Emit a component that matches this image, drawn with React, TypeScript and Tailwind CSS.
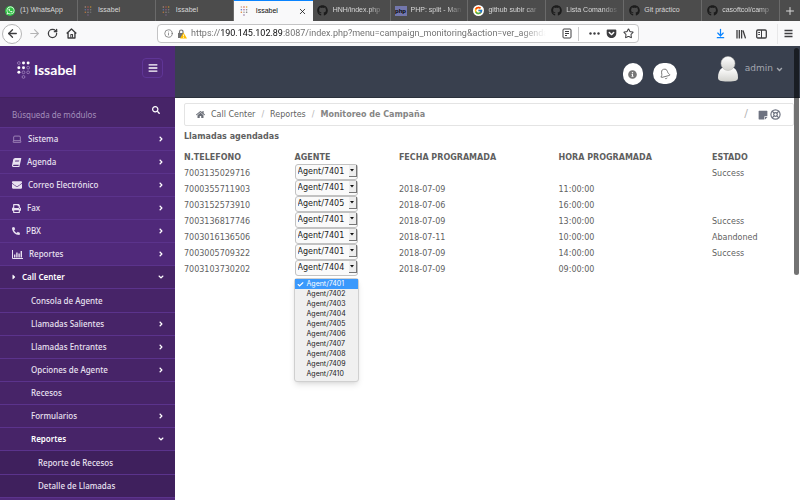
import React from 'react';
import {
  FaAngleDown, FaAngleRight, FaBars, FaBook, FaCaretRight, FaEnvelope, FaGetPocket, FaGithub,
  FaHome, FaInfoCircle, FaPhoneAlt, FaPrint, FaSearch, FaStickyNote, FaWhatsapp,
} from 'react-icons/fa';
import { FcGoogle } from 'react-icons/fc';
import { ArrowLeft, ArrowRight, ArrowDownToLine, Bell, Check, Info, Laptop, LifeBuoy, Plus, RotateCw, Star, X } from 'lucide-react';

const LOGO_DOTS: [number, number, boolean][] = [
  [2, 2, false], [7, 2, true], [12, 2, true],
  [2, 7, true], [7, 7, true], [12, 7, false],
  [2, 12, true], [7, 12, false], [12, 12, false],
  [7, 17, false],
];

function IssabelMark() {
  return (
    <svg width="13" height="18" viewBox="0 0 14 19" aria-hidden="true">
      {LOGO_DOTS.map(([x, y, full]) => (
        <circle key={`${x}-${y}`} cx={x} cy={y} r={full ? 1.6 : 1.5} fill={full ? '#fff' : 'none'} stroke={full ? 'none' : '#a68bc2'} strokeWidth="0.8" />
      ))}
    </svg>
  );
}

function IssabelFavicon({ light = false }: { light?: boolean }) {
  const colors = ['#c9a08a', '#d9573c', '#e0a030', '#5b7fc4', '#b05a9a', '#8a8a8a', '#e0853a', '#9a9a9a', '#7d7d7d', '#8a6a9a'];
  return (
    <svg width="8" height="10" viewBox="0 0 14 19" aria-hidden="true" opacity={light ? 1 : 0.75}>
      {LOGO_DOTS.map(([x, y], i) => <circle key={i} cx={x} cy={y} r="1.5" fill={colors[i]} />)}
    </svg>
  );
}

const github = <FaGithub size={11} className="text-[#1c1c1c]" />;

const tabs: { title: string; icon: React.ReactNode; active?: boolean }[] = [
  {
    title: '(1) WhatsApp',
    icon: (
      <span className="grid size-2.5 place-items-center rounded-full bg-[#2fc143] text-white">
        <FaWhatsapp size={9} />
      </span>
    ),
  },
  { title: 'Issabel', icon: <IssabelFavicon /> },
  { title: 'Issabel', icon: <IssabelFavicon /> },
  { title: 'Issabel', icon: <IssabelFavicon light />, active: true },
  { title: 'HNH/index.php', icon: github },
  {
    title: 'PHP: split - Man',
    icon: <span className="grid h-2.5 w-3 place-items-center bg-[#7377ad] text-[6px] leading-none font-bold text-black">php</span>,
  },
  { title: 'github subir car', icon: <span className="rounded-full bg-white p-px"><FcGoogle size={9} /></span> },
  { title: 'Lista Comandos', icon: github },
  { title: 'Git práctico', icon: github },
  { title: 'casoftcol/camp', icon: github },
];

function TabStrip() {
  return (
    <div role="tablist" className="flex h-[21px] bg-[#4c4c4c] font-['Liberation_Sans',sans-serif] text-[7px] font-medium text-[#d8d8d8]">
      {tabs.map((t, i) => (
        <div
          key={i}
          role="tab"
          aria-selected={!!t.active}
          className={
            t.active
              ? 'flex min-w-0 flex-1 items-center gap-1.5 border-t border-[#0a84ff] bg-[#f9f9fa] pr-1.5 pl-1 text-[#0c0c0d]'
              : 'flex min-w-0 flex-1 items-center gap-1 border-r border-[#6a6a6a] pr-1 pl-1'
          }
        >
          <span className="grid w-3 shrink-0 place-items-center">{t.icon}</span>
          <span className={t.title.length > 12 ? 'flex-1 mask-r-from-70% whitespace-nowrap' : 'flex-1 whitespace-nowrap'}>{t.title}</span>
          {t.active && <button aria-label="Cerrar"><X size={9} strokeWidth={2} /></button>}
        </div>
      ))}
      <button aria-label="Nueva" className="grid w-5 place-items-center"><Plus size={12} /></button>
    </div>
  );
}

function Toolbar() {
  return (
    <div className="flex h-[25px] items-center bg-[#f9f9fa] text-[#3e3e40]">
      <div className="flex items-center gap-1.5 pl-0.5">
        <button aria-label="Atrás" className="grid size-5 place-items-center rounded-full border border-[#b5b5b6] bg-white"><ArrowLeft size={13} strokeWidth={2.4} /></button>
        <button aria-label="Adelante" className="text-[#b4b4b5]"><ArrowRight size={13} strokeWidth={2} /></button>
        <button aria-label="Recargar"><RotateCw size={11} strokeWidth={2.8} /></button>
        <button aria-label="Inicio" className="ml-0.5">
          <svg width="11" height="11" viewBox="0 0 16 16" fill="none" stroke="currentColor" strokeWidth="2" strokeLinejoin="round">
            <path d="M1 8L8 1.5L15 8M3 7V14.5H13V7" />
            <path d="M7 14V9.500H9.500V14" strokeWidth="1.500" />
          </svg>
        </button>
      </div>
      <div className="mr-19 ml-20 flex h-[19px] min-w-0 flex-1 items-center rounded-sm border border-[#c4c4c5] bg-white pr-1 pl-1.5">
        <Info size={9} className="shrink-0 text-[#6d6d6e]" />
        <svg className="ml-1 shrink-0" width="10" height="10" viewBox="0 0 20 20" aria-hidden="true">
          <path d="M5 9V5.500a3.500 3.500 0 0 1 7 0V9" fill="none" stroke="#737373" strokeWidth="2.400" />
          <rect x="2" y="8" width="12" height="10" fill="#737373" />
          <path d="M13 7L20 19H6Z" fill="#ffbf00" />
          <path d="M13 11V15M13 16.500V18" stroke="#fff" strokeWidth="1.600" />
        </svg>
        <div className="ml-1 min-w-0 flex-1 mask-r-from-93% font-['Roboto','Inter',sans-serif] text-[9px] whitespace-nowrap text-[#737373]">
          https://<span className="text-[#0c0c0d]">190.145.102.89</span>:8087/index.php?menu=campaign_monitoring&amp;action=ver_agenda
        </div>
        <div className="ml-4 flex shrink-0 items-center gap-1.5">
          <svg width="10" height="11" viewBox="0 0 10 11" fill="none" stroke="currentColor" aria-hidden="true">
            <rect x="1" y="1" width="8" height="9" rx="1" />
            <path d="M3 3.500H7M3 5.500H7M3 7.500H5" />
          </svg>
          <span className="h-3.5 w-px bg-[#c9c9ca]" />
          <svg className="ml-1" width="11" height="3" viewBox="0 0 11 3" fill="currentColor" aria-hidden="true">
            <circle cx="1.500" cy="1.500" r="1.200" /><circle cx="5.500" cy="1.500" r="1.200" /><circle cx="9.500" cy="1.500" r="1.200" />
          </svg>
          <FaGetPocket size={11} />
          <Star size={11} strokeWidth={2.2} />
        </div>
      </div>
      <div className="flex shrink-0 items-center gap-2.5 pr-[7px]">
        <ArrowDownToLine size={11} strokeWidth={2.6} className="text-[#0a84ff]" />
        <svg width="10" height="10" viewBox="0 0 10 10" stroke="currentColor" strokeWidth="1.300" aria-hidden="true">
          <path d="M1 1V9.500M3.300 1V9.500M5.600 1V9.500M7 1.500L9.500 9.300" />
        </svg>
        <svg width="11" height="10" viewBox="0 0 11 10" fill="none" stroke="currentColor" aria-hidden="true">
          <rect x="0.700" y="1" width="9.600" height="8" rx="1.200" strokeWidth="1.300" />
          <path d="M5.500 1V9M2.200 3.500H4M2.200 5.500H4" />
        </svg>
        <button aria-label="Menú" className="grid h-5 place-items-center border-l border-[#e8e8e9] pl-1.5">
          <svg width="9" height="9" viewBox="0 0 9 9" stroke="currentColor" strokeWidth="1.300"><path d="M0.500 1.500H8.500M0.500 4.500H8.500M0.500 7.500H8.500" /></svg>
        </button>
      </div>
    </div>
  );
}

type Arrow = 'right' | 'down' | null;

function NavRow({ label, icon, arrow, indent, strong = false }: { label: string; icon?: React.ReactNode; arrow: Arrow; indent: string; strong?: boolean }) {
  return (
    <a href="#" className={`flex h-[23px] items-center border-b border-[#5b338c] pr-2.5 ${indent} ${strong ? 'font-semibold text-white' : 'font-medium text-[#e9e2f1]'}`}>
      {icon && <span className="mr-1.5 shrink-0">{icon}</span>}
      <span className="flex-1">{label}</span>
      {arrow === 'right' && <FaAngleRight size={8} className="text-white" />}
      {arrow === 'down' && <FaAngleDown size={8} className="text-white" />}
    </a>
  );
}

const barChart = (
  <svg width="11" height="9" viewBox="0 0 11 9" aria-hidden="true">
    <path d="M0.500 0V8.500H11" fill="none" stroke="currentColor" />
    <path d="M2 4.500H3.400V7.500H2ZM4.200 2.500H5.600V7.500H4.200ZM6.400 3.500H7.800V7.500H6.400ZM8.600 1H10V7.500H8.600Z" fill="currentColor" />
  </svg>
);

const modules: [string, React.ReactNode][] = [
  ['Sistema', <Laptop size={10} className="text-[#a992c2]" />],
  ['Agenda', <FaBook size={9} className="-skew-x-12" />],
  ['Correo Electrónico', <FaEnvelope size={10} />],
  ['Fax', <FaPrint size={9} />],
  ['PBX', <FaPhoneAlt size={8} />],
  ['Reportes', barChart],
];

const callCenter: [string, Arrow][] = [
  ['Consola de Agente', null],
  ['Llamadas Salientes', 'right'],
  ['Llamadas Entrantes', 'right'],
  ['Opciones de Agente', 'right'],
  ['Recesos', null],
  ['Formularios', 'right'],
  ['Reportes', 'down'],
];

function Sidebar() {
  return (
    <aside className="w-[175px] shrink-0 bg-[#50297a] font-['Noto_Sans','Open_Sans',sans-serif] text-[8px]">
      <div className="flex h-[52px] items-start justify-between border-b border-[#43215f] pt-3 pr-3 pl-[17px]">
        <div className="flex items-center gap-1 pt-0.5 text-white">
          <IssabelMark />
          <span className="font-['Lato','Open_Sans',sans-serif] text-[14px] leading-5 font-bold">Issabel</span>
        </div>
        <button aria-label="Contraer" className="grid h-5 w-[21px] place-items-center rounded-sm border border-[#5f3596] text-white"><FaBars size={10} /></button>
      </div>
      <form className="flex h-[30px] items-start border-b border-[#5b338c] bg-[#472468] pt-2 pr-[15px] pl-3">
        <input aria-label="Búsqueda de módulos" placeholder="Búsqueda de módulos" className="h-4 min-w-0 flex-1 bg-transparent outline-none placeholder:text-[#a48fbb]" />
        <button type="button" aria-label="Buscar" className="text-white"><FaSearch size={8} /></button>
      </form>
      <nav>
        {modules.map(([label, icon]) => <NavRow key={label} label={label} icon={icon} arrow="right" indent="pl-3" />)}
        <div className="bg-[#472468]">
          <NavRow label="Call Center" icon={<FaCaretRight size={8} className="-mx-0.5" />} arrow="down" indent="pl-3" strong />
          <div className="pt-px">
            {callCenter.map(([label, arrow]) => <NavRow key={label} label={label} arrow={arrow} indent="pl-[31px]" strong={arrow === 'down'} />)}
          </div>
          <div className="bg-[#3f205d] pt-px">
            <NavRow label="Reporte de Recesos" arrow={null} indent="pl-[38px]" />
            <NavRow label="Detalle de Llamadas" arrow={null} indent="pl-[38px]" />
          </div>
        </div>
      </nav>
    </aside>
  );
}

function TopBar() {
  return (
    <header className="flex h-[52px] items-start justify-end border-b border-[#2b313b] bg-[#39404e] pr-4">
      <button aria-label="Información" className="mt-[17px] grid h-[22px] w-5 place-items-center rounded-full bg-white text-[#777]"><FaInfoCircle size={9} /></button>
      <button aria-label="Notificaciones" className="mt-[17px] ml-2.5 grid h-[21px] w-6 place-items-center rounded-full bg-white text-[#777]"><Bell size={12} strokeWidth={1.8} className="-rotate-15" /></button>
      <div className="mt-2.5 ml-10 flex items-center gap-1.5 text-[9px] text-[#a3a7ae]">
        <svg width="22" height="26" viewBox="0 0 22 26" aria-hidden="true">
          <defs>
            <linearGradient id="avatar" x1="0" y1="0" x2="0" y2="1"><stop offset="0" stopColor="#fff" /><stop offset="1" stopColor="#d2d2ce" /></linearGradient>
          </defs>
          <path d="M5 12C2 14 1 18 1 21.500C1 24.500 3 25.500 11 25.500S21 24.500 21 21.500C21 18 20 14 17 12Z" fill="url(#avatar)" />
          <circle cx="11" cy="7.500" r="7" fill="url(#avatar)" stroke="#b4b4b0" strokeWidth="0.500" />
        </svg>
        <span>admin</span>
        <FaAngleDown size={9} className="-ml-1" />
      </div>
    </header>
  );
}

const AGENTS = ['7401', '7402', '7403', '7404', '7405', '7406', '7407', '7408', '7409', '7410'].map((n) => `Agent/${n}`);

const calls = [
  ['7003135029716', '7401', '', '', 'Success'],
  ['7000355711903', '7401', '2018-07-09', '11:00:00', ''],
  ['7003152573910', '7405', '2018-07-06', '16:00:00', ''],
  ['7003136817746', '7401', '2018-07-09', '13:00:00', 'Success'],
  ['7003016136506', '7401', '2018-07-11', '10:00:00', 'Abandoned'],
  ['7003005709322', '7401', '2018-07-09', '14:00:00', 'Success'],
  ['7003103730202', '7404', '2018-07-09', '09:00:00', ''],
];

function AgentMenu() {
  return (
    <ul role="listbox" aria-label="Agentes" className="absolute top-full -left-px z-10 mt-0.5 w-[65px] rounded-[3px] border border-[#d0d0d0] bg-[#f0f0f0] pb-0.5 font-['Inter',sans-serif] text-[7px] leading-[10px] text-[#1a1a1a] shadow-md">
      {AGENTS.map((a, i) => (
        <li key={a} role="option" aria-selected={i === 0} className={i === 0 ? 'flex items-center bg-[#3b99fc] text-white' : 'flex items-center'}>
          <span className="grid w-3 place-items-center">{i === 0 && <Check size={7} strokeWidth={4} />}</span>
          {a}
        </li>
      ))}
    </ul>
  );
}

function AgentSelect({ agent, phone }: { agent: string; phone: string }) {
  return (
    <div className="relative w-[63px]">
      <select
        aria-label={`Agente ${phone}`}
        defaultValue={`Agent/${agent}`}
        className="block h-4 w-full appearance-none rounded-[3px] border border-[#c2c2c2] bg-[#fafafa] pb-px pl-0.5 text-[8px] leading-3 text-[#222]"
      >
        {AGENTS.map((a) => <option key={a}>{a}</option>)}
      </select>
      <span className="pointer-events-none absolute top-px right-px grid h-3 w-2 place-items-center border-r border-b border-[#777] bg-[#eee]">
        <svg width="4" height="3" viewBox="0 0 4 3" aria-hidden="true"><path d="M0 0H4L2 2.500Z" fill="#111" /></svg>
      </span>
    </div>
  );
}

function Content() {
  return (
    <main className="pl-[9px] text-[8px] text-[#5f5f5f]">
      <div className="mt-[5px] mr-1.5 flex h-[23px] items-center rounded-xs border border-[#e4e4e4] pr-3 pl-[11px]">
        <nav aria-label="Ruta" className="flex items-center">
          <FaHome size={9} className="mr-1.5 text-[#6b6f78]" />
          <a href="#">Call Center</a>
          <span className="mx-1.5 text-[#b5b5b5]">/</span>
          <a href="#">Reportes</a>
          <span className="mx-1.5 text-[#b5b5b5]">/</span>
          <span className="font-bold text-[#858585]">Monitoreo de Campaña</span>
        </nav>
        <div className="ml-auto flex items-center gap-0.5 text-[#6d7280]">
          <span className="mr-2 text-[11px] text-[#b5b5b5]">/</span>
          <FaStickyNote size={10} />
          <LifeBuoy size={11} strokeWidth={2.6} />
        </div>
      </div>
      <h1 className="mt-[5px] leading-3 font-bold">Llamadas agendadas</h1>
      <div className="mt-[9px] mr-0.5">
        <table className="w-full table-fixed text-left">
          <colgroup>
            <col className="w-[18%]" />
            <col className="w-[17%]" />
            <col className="w-[26%]" />
            <col className="w-[25%]" />
            <col />
          </colgroup>
          <thead>
            <tr className="h-3 leading-3">
              {['N.TELEFONO', 'AGENTE', 'FECHA PROGRAMADA', 'HORA PROGRAMADA', 'ESTADO'].map((h) => <th key={h} className="p-0 font-bold">{h}</th>)}
            </tr>
          </thead>
          <tbody>
            {calls.map(([phone, agent, date, time, status], i) => (
              <tr key={phone} className="h-4 leading-3">
                <td className="p-0 align-bottom">{phone}</td>
                <td className="relative p-0">
                  <AgentSelect agent={agent} phone={phone} />
                  {i === calls.length - 1 && <AgentMenu />}
                </td>
                <td className="p-0 align-bottom">{date}</td>
                <td className="p-0 align-bottom">{time}</td>
                <td className="p-0 align-bottom">{status}</td>
              </tr>
            ))}
          </tbody>
        </table>
      </div>
    </main>
  );
}

export default function App() {
  return (
    <div className="flex h-screen flex-col overflow-hidden bg-white font-['Inter','Liberation_Sans',sans-serif]">
      <TabStrip />
      <Toolbar />
      <div className="relative flex min-h-0 flex-1 overflow-hidden font-['DejaVu_Sans',sans-serif]">
        <Sidebar />
        <div className="min-w-0 flex-1">
          <TopBar />
          <Content />
        </div>
        <div className="absolute top-0.5 right-px h-1/2 w-[5px] rounded-full bg-black/55" />
      </div>
    </div>
  );
}
